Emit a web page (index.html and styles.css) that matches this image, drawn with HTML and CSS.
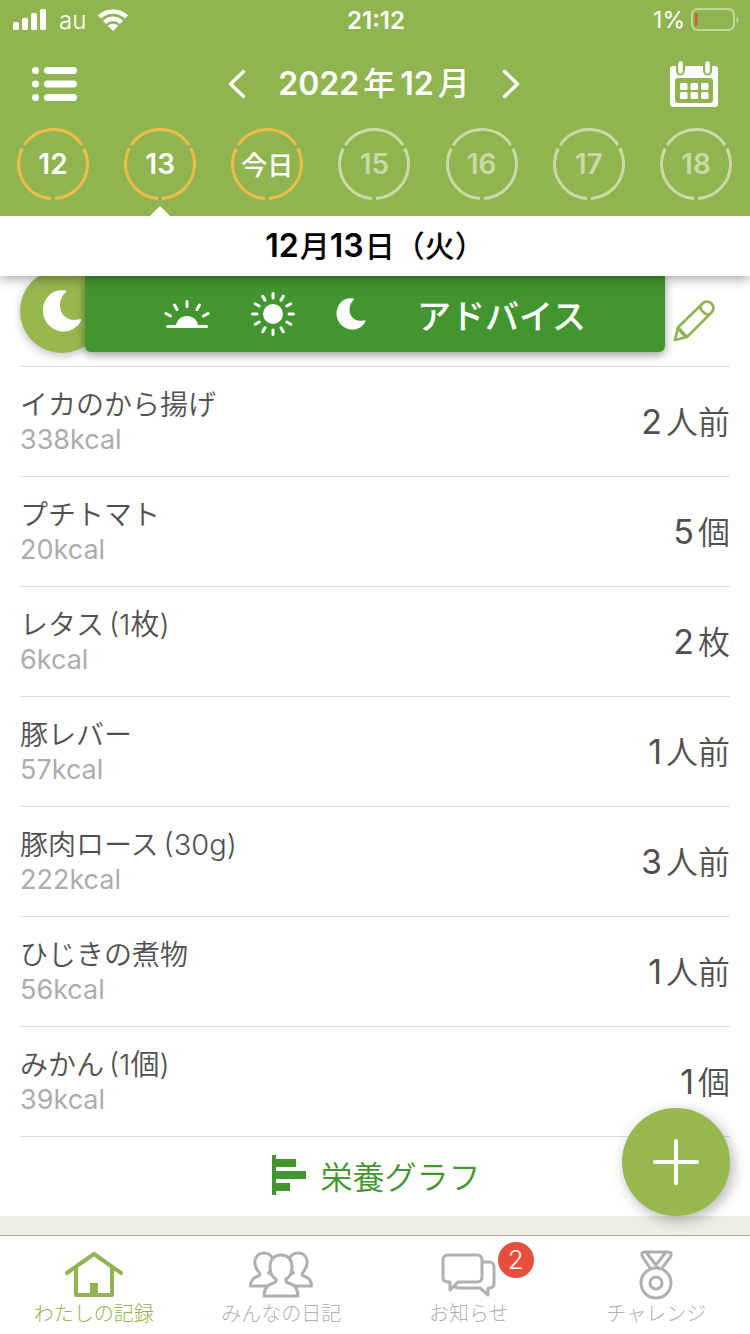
FILE: index.html
```html
<!DOCTYPE html>
<html lang="ja">
<head>
<meta charset="utf-8">
<meta name="viewport" content="width=device-width, initial-scale=1">
<title>わたしの記録</title>
<link rel="stylesheet" href="styles.css">
</head>
<body>
<svg class="defs" aria-hidden="true">
  <symbol id="ring" viewBox="0 0 72 72"><circle cx="36" cy="36" r="34.5" pathLength="360" fill="none" stroke="currentColor" stroke-width="3" stroke-dasharray="113.4 6.6" transform="rotate(93.3 36 36)"/></symbol>
  <symbol id="moon" viewBox="0 0 38 42"><path fill="currentColor" d="M22 .5C8.500-1.500 0 9 0 20.500C0 32.500 9.500 41.500 20.500 41.500C28.500 41.500 35.500 36.500 38 30.500C38.500 29.500 37.500 28.800 36.500 29.200C25.500 32.500 17 25 17 15.500C17 9.500 19.500 5 23 2C23.800 1.300 23.200.600 22 .5Z"/></symbol>
</svg>
<div class="app">
  <header class="top">
    <div class="status">
      <div class="status-side">
        <svg width="34" height="22" viewBox="0 0 34 22" fill="#fff"><rect x="0" y="13" width="6" height="8" rx="1.500"/><rect x="9" y="9" width="6" height="12" rx="1.500"/><rect x="18" y="4" width="6" height="17" rx="1.500"/><rect x="27" y="0" width="6" height="21" rx="1.500"/></svg>
        <span class="carrier">au</span>
        <svg width="30" height="22" viewBox="0 0 30 22"><path fill="none" stroke="#fff" stroke-width="4.500" d="M1.500 8C9 .500 21 .500 28.500 8M6.500 13.300C11.500 8.500 18.500 8.500 23.500 13.300"/><path fill="#fff" d="M15 22L9.700 16.700C12.700 14 17.300 14 20.300 16.700Z"/></svg>
      </div>
      <time class="clock">21:12</time>
      <div class="status-side status-end">
        <span>1%</span>
        <svg width="48" height="24" viewBox="0 0 48 24"><rect x="1" y="1" width="42" height="21" rx="5.500" fill="none" stroke="#fff" stroke-opacity=".45" stroke-width="2"/><path d="M45.500 8.500C48.200 9.500 48.200 14 45.500 15Z" fill="#fff" fill-opacity=".45"/><rect x="4" y="5" width="2.500" height="13" rx="1" fill="#c9602f"/></svg>
      </div>
    </div>
    <div class="month-bar">
      <button class="icon-btn" aria-label="メニュー"><svg width="46" height="34" viewBox="0 0 46 34" fill="#fff"><circle cx="3.500" cy="3.500" r="3.500"/><circle cx="3.500" cy="17" r="3.500"/><circle cx="3.500" cy="30.500" r="3.500"/><rect x="12" width="33" height="7" rx="3.500"/><rect x="12" y="13.500" width="33" height="7" rx="3.500"/><rect x="12" y="27" width="33" height="7" rx="3.500"/></svg></button>
      <div class="month-picker">
        <button class="icon-btn" aria-label="前の月"><svg width="18" height="30" viewBox="0 0 18 30"><path d="M15.500 2.500L2.500 15L15.500 27.500" fill="none" stroke="#fff" stroke-width="3.500" stroke-linecap="round" stroke-linejoin="round"/></svg></button>
        <h1 class="month">2022<span class="unit">年</span>12<span class="unit-end">月</span></h1>
        <button class="icon-btn" aria-label="次の月"><svg width="18" height="30" viewBox="0 0 18 30"><path d="M2.500 2.500L15.500 15L2.500 27.500" fill="none" stroke="#fff" stroke-width="3.500" stroke-linecap="round" stroke-linejoin="round"/></svg></button>
      </div>
      <button class="icon-btn" aria-label="カレンダー"><svg width="48" height="46" viewBox="0 0 48 46"><rect y="5" width="48" height="41" rx="3" fill="#fff"/><rect x="5" y="17" width="38" height="25" rx="3" fill="#90b550"/><g fill="#fff"><rect x="10" y="22" width="7.500" height="7" rx="1.500"/><rect x="20.500" y="22" width="7.500" height="7" rx="1.500"/><rect x="31" y="22" width="7.500" height="7" rx="1.500"/><rect x="10" y="31" width="7.500" height="7" rx="1.500"/><rect x="20.500" y="31" width="7.500" height="7" rx="1.500"/><rect x="31" y="31" width="7.500" height="7" rx="1.500"/></g><g stroke-linecap="round"><path d="M10.500 4V10M37.500 4V10" stroke="#90b550" stroke-width="9"/><path d="M10.500 2.500V10.500M37.500 2.500V10.500" stroke="#fff" stroke-width="4.500"/></g></svg></button>
    </div>
    <nav class="days">
      <button class="day"><svg class="ring"><use href="#ring"/></svg><span>12</span></button>
      <button class="day is-selected"><svg class="ring"><use href="#ring"/></svg><span>13</span></button>
      <button class="day"><svg class="ring"><use href="#ring"/></svg><span class="today">今日</span></button>
      <button class="day is-future"><svg class="ring"><use href="#ring"/></svg><span>15</span></button>
      <button class="day is-future"><svg class="ring"><use href="#ring"/></svg><span>16</span></button>
      <button class="day is-future"><svg class="ring"><use href="#ring"/></svg><span>17</span></button>
      <button class="day is-future"><svg class="ring"><use href="#ring"/></svg><span>18</span></button>
    </nav>
  </header>
  <h2 class="date"><span class="date-num">12</span>月<span class="date-num">13</span>日（火）</h2>
  <main class="meal">
    <div class="meal-head">
      <span class="meal-icon"><svg width="38" height="42"><use href="#moon"/></svg></span>
      <button class="advice">
        <svg width="46" height="28" viewBox="0 0 46 28" fill="none" stroke="#fff" stroke-width="3" stroke-linecap="round"><path d="M3.500 26.500H42.500"/><path d="M23 1.500V6.500M10.500 5L13 9.500M35.500 5L33 9.500M2 13.500L6.500 16M44 13.500L39.500 16"/><path d="M12 26C13 12.500 33 12.500 34 26Z" fill="#fff" stroke="none"/></svg>
        <svg width="44" height="44" viewBox="0 0 44 44"><circle cx="22" cy="22" r="10" fill="#fff"/><path stroke="#fff" stroke-width="3" stroke-linecap="round" d="M22 1.500V6M22 38V42.500M1.500 22H6M38 22H42.500M11.750 4.250L14 8.140M30 35.860L32.250 39.750M4.250 11.750L8.140 14M35.860 30L39.750 32.250M32.250 4.250L30 8.140M14 35.860L11.750 39.750M39.750 11.750L35.860 14M8.140 30L4.250 32.250"/></svg>
        <svg width="30" height="32"><use href="#moon"/></svg>
        <span class="advice-label">アドバイス</span>
      </button>
      <button class="icon-btn edit" aria-label="編集"><svg width="42" height="42" viewBox="0 0 42 42" fill="none" stroke="#90b550" stroke-width="2.800" stroke-linejoin="round"><path d="M2 40L5 27.500L29.500 3.500C32 1 36 1 38.500 3.500C41 6 41 10 38.500 12.500L14 37Z"/><path d="M27 6C28 11 31 14 36 15M5 27.500L14 37M5 27.500C7 31 10 35 14 37"/></svg></button>
    </div>
    <ul class="foods">
      <li class="food"><div><p class="name">イカのから揚げ</p><p class="kcal">338kcal</p></div><p class="amount"><span class="num">2</span>人前</p></li>
      <li class="food"><div><p class="name">プチトマト</p><p class="kcal">20kcal</p></div><p class="amount"><span class="num">5</span>個</p></li>
      <li class="food"><div><p class="name">レタス<span class="portion">(1枚)</span></p><p class="kcal">6kcal</p></div><p class="amount"><span class="num">2</span>枚</p></li>
      <li class="food"><div><p class="name">豚レバー</p><p class="kcal">57kcal</p></div><p class="amount"><span class="num">1</span>人前</p></li>
      <li class="food"><div><p class="name">豚肉ロース<span class="portion">(30g)</span></p><p class="kcal">222kcal</p></div><p class="amount"><span class="num">3</span>人前</p></li>
      <li class="food"><div><p class="name">ひじきの煮物</p><p class="kcal">56kcal</p></div><p class="amount"><span class="num">1</span>人前</p></li>
      <li class="food"><div><p class="name">みかん<span class="portion">(1個)</span></p><p class="kcal">39kcal</p></div><p class="amount"><span class="num">1</span>個</p></li>
    </ul>
    <button class="graph"><svg width="34" height="40" viewBox="0 0 34 40" fill="#43962f"><path d="M0 0H4V4H24V12H4V16H34V24H4V28H18V36H4V40H0Z"/></svg>栄養グラフ</button>
  </main>
  <div class="spacer"></div>
  <button class="add" aria-label="追加"><svg width="46" height="46" viewBox="0 0 46 46"><path d="M23 2V44M2 23H44" stroke="#fff" stroke-width="4" stroke-linecap="round"/></svg></button>
  <nav class="tabs">
    <a class="tab is-active" href="#home"><svg width="64" height="50" viewBox="0 0 64 50" fill="none" stroke="currentColor" stroke-width="4" stroke-linecap="round" stroke-linejoin="round"><path d="M5 23L32 4L59 23M14 18V45H50V18"/><path d="M28 33H36V45H28Z" fill="currentColor" stroke="none"/></svg>わたしの記録</a>
    <a class="tab" href="#diary"><svg width="68" height="50" viewBox="0 0 68 50" fill="none" stroke="currentColor" stroke-width="3" stroke-linejoin="round"><path id="person" d="M21 36H3.500C3.500 31 6 28 10 26.500C14 25 13.500 24 11 21C5 13 8 3 17 3C21 3 24 5 25.500 8.500"/><use href="#person" transform="matrix(-1 0 0 1 68 0)"/><path fill="currentColor" stroke-width="1" d="M24 18L20 23L28 28.500Z M44 18L48 23L40 28.500Z"/><path fill="#fff" d="M29 29C25 27 23 22 23 16C23 9 28 5 34 5C40 5 45 9 45 16C45 22 43 27 39 29C38 32 41 33 44 34C49 36 51 41 51 46H17C17 41 19 36 24 34C27 33 30 32 29 29Z"/></svg>みんなの日記</a>
    <a class="tab" href="#news"><span class="tab-icon"><svg width="58" height="50" viewBox="0 0 58 50" fill="none" stroke="currentColor" stroke-width="3" stroke-linejoin="round"><path d="M8 5H37Q42 5 42 10V27Q42 32 37 32H18L10 40V32H8Q3 32 3 27V10Q3 5 8 5ZM42 12H49Q54 12 54 17V33Q54 38 49 38H48V45L40 38H19Q15 38 15 35"/></svg><span class="badge">2</span></span>お知らせ</a>
    <a class="tab" href="#challenge"><svg width="36" height="50" viewBox="0 0 36 50" fill="none" stroke="currentColor" stroke-width="3" stroke-linejoin="round"><circle cx="18" cy="33" r="15"/><circle cx="18" cy="33" r="6"/><path d="M12 18L4 6Q3 2 7 2H30Q34 2 33 6L24 18M8 2L20 18M28 2L18 15"/></svg>チャレンジ</a>
  </nav>
</div>
</body>
</html>
```
FILE: styles.css
```css
* { box-sizing: border-box; }

body {
  margin: 0;
  background: #edede4;
  color: #505050;
  font-family: Inter, "Noto Sans CJK JP", sans-serif;
}

h1, h2, p, ul { margin: 0; padding: 0; }
ul { list-style: none; }
svg { display: block; flex: none; }

button {
  margin: 0;
  padding: 0;
  border: 0;
  background: none;
  color: inherit;
  font: inherit;
  cursor: pointer;
}

.defs { position: absolute; width: 0; height: 0; }

.app {
  display: flex;
  flex-direction: column;
  min-height: 100vh;
}

.top { background: #90b550; color: #fff; }

.status {
  display: flex;
  align-items: center;
  height: 40px;
  padding: 0 11px 0 13px;
  font-size: 23px;
}
.status-side { display: flex; flex: 1; align-items: center; gap: 12px; }
.status-end { justify-content: flex-end; gap: 6px; }
.carrier { font-size: 24px; font-weight: 300; }
.clock { font-size: 24px; font-weight: 600; }

.month-bar {
  display: flex;
  align-items: center;
  justify-content: space-between;
  height: 88px;
  padding: 0 32px;
}
.icon-btn { display: flex; align-items: center; }
.month-picker { display: flex; align-items: center; gap: 32px; }
.month { font-size: 32px; font-weight: 600; line-height: 40px; }
.unit { margin: 0 5px 0 4px; font-weight: 500; }
.unit-end { margin-left: 4px; font-weight: 500; }

.days {
  display: flex;
  justify-content: space-between;
  padding: 0 18px 16px 17px;
}
.day {
  position: relative;
  display: grid;
  place-items: center;
  width: 72px;
  height: 72px;
  font-size: 28px;
  font-weight: 600;
}
.day > * { grid-area: 1 / 1; }
.today { padding-bottom: 2px; font-size: 26px; font-weight: 500; }
.ring { width: 72px; height: 72px; color: #efbd45; }
.is-future { color: #c8dba7; }
.is-future .ring { color: #c8dba7; }
.is-selected::after {
  content: "";
  position: absolute;
  bottom: -16px;
  left: 50%;
  margin-left: -10px;
  border: 10px solid transparent;
  border-top: 0;
  border-bottom-color: #fff;
}

.date {
  position: relative;
  z-index: 2;
  background: #fff;
  box-shadow: 0 2px 12px rgba(0, 0, 0, .4);
  clip-path: inset(0 0 -20px);
  color: #000;
  font-size: 30px;
  font-weight: 500;
  line-height: 60px;
  text-align: center;
}
.date-num { margin-right: 1px; font-size: 32px; font-weight: 600; }

.meal { padding: 0 20px; background: #fff; }

.meal-head {
  position: relative;
  display: flex;
  justify-content: space-between;
  height: 90px;
}
.meal-icon {
  display: grid;
  place-items: center;
  width: 84px;
  height: 84px;
  margin-top: -7px;
  border-radius: 50%;
  background: #96b84f;
  box-shadow: 0 3px 8px rgba(0, 0, 0, .25);
  color: #fff;
}
.edit { padding-right: 15px; }
.advice {
  position: absolute;
  top: 0;
  right: 65px;
  left: 65px;
  display: flex;
  align-items: center;
  justify-content: center;
  gap: 41px;
  height: 76px;
  border-radius: 0 0 6px 6px;
  background: #43962f;
  box-shadow: 0 3px 10px rgba(0, 0, 0, .4);
  color: #fff;
}
.advice-label { margin-left: 10px; font-size: 34px; font-weight: 500; }

.food {
  display: flex;
  align-items: center;
  justify-content: space-between;
  height: 110px;
  border-top: 1px solid #dcdcdc;
}
.name { font-size: 28px; font-weight: 350; line-height: 36px; }
.portion { margin-left: 5px; }
.kcal { color: #acacac; font-size: 27px; font-weight: 400; line-height: 34px; }
.amount { padding-bottom: 4px; font-size: 32px; font-weight: 350; }
.num { margin-right: 4px; font-size: 34px; font-weight: 400; }
.portion { font-size: 29px; }

.graph {
  display: flex;
  align-items: center;
  justify-content: center;
  gap: 14px;
  width: 100%;
  height: 80px;
  padding: 0 0 3px 3px;
  border-top: 1px solid #dcdcdc;
  color: #43962f;
  font-size: 32px;
  font-weight: 350;
}

.spacer { flex: 1; min-height: 19px; }

.add {
  position: fixed;
  z-index: 3;
  right: 20px;
  bottom: 118px;
  display: grid;
  place-items: center;
  width: 108px;
  height: 108px;
  border-radius: 50%;
  background: #96b84f;
  box-shadow: 3px 4px 14px rgba(0, 0, 0, .3);
}

.tabs {
  display: flex;
  height: 99px;
  border-top: 1px solid #a5a5a0;
  background: #fff;
}
.tab {
  display: flex;
  flex: 1;
  flex-direction: column;
  align-items: center;
  padding-top: 14px;
  color: #b0b0b0;
  font-size: 20px;
  font-weight: 300;
  line-height: 28px;
  text-decoration: none;
}
.is-active { color: #90b550; }
.tab-icon { position: relative; }
.badge {
  position: absolute;
  top: -8px;
  left: 58px;
  width: 36px;
  height: 36px;
  border-radius: 50%;
  background: #e94e3d;
  color: #fff;
  font-size: 26px;
  line-height: 36px;
  text-align: center;
}
```
